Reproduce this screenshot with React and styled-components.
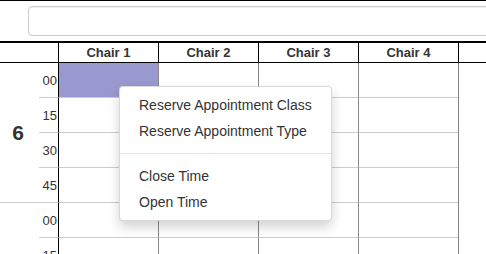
import React from "react";
import styled, { createGlobalStyle } from "styled-components";

const Global = createGlobalStyle`
  html, body { margin: 0; padding: 0; background: #fff; overflow: hidden; }
  body { font-family: "Liberation Sans", Arial, Helvetica, sans-serif; color: #333; }
  * { box-sizing: border-box; }
`;

const Page = styled.div`
  position: relative;
  width: 486px;
  height: 254px;
  overflow: hidden;
  border-top: 1px solid #000;
`;

const Toolbar = styled.div`
  height: 40px;
  padding: 5px 0 0 28px;
  display: flex;
`;

const SearchInput = styled.input`
  flex: 0 0 600px;
  height: 30px;
  border: 1px solid #ccc;
  border-radius: 4px;
  box-shadow: inset 0 1px 1px rgba(0, 0, 0, 0.075);
  outline: none;
`;

const Table = styled.div`
  border-top: 2px solid #000;
`;

const HeaderRow = styled.div`
  display: grid;
  grid-template-columns: 58px 100px 100px 100px 100px 1fr;
  height: 20px;
  border-bottom: 1px solid #000;
`;

const HeaderCell = styled.div`
  border-left: ${(p) => (p.$edge ? "1px solid #000" : "none")};
  font-weight: bold;
  font-size: 13px;
  line-height: 19px;
  text-align: center;
  color: #333;
`;

const Body = styled.div`
  display: grid;
  grid-template-columns: 39px 19px 100px 100px 100px 100px 1fr;
  grid-auto-rows: 35px;
`;

const HourCell = styled.div`
  grid-row: span 4;
  grid-column: 1;
  border-bottom: 1px solid #ccc;
  display: flex;
  align-items: center;
  justify-content: center;
  font-weight: bold;
  font-size: 21px;
  padding-right: 3px;
  color: #333;
`;

const MinuteCell = styled.div`
  grid-column: 2;
  border-bottom: 1px solid #ccc;
  display: flex;
  align-items: center;
  justify-content: flex-end;
  font-size: 13px;
  color: #333;
  padding-right: 1px;
`;

const SlotCell = styled.div`
  border-left: 1px solid ${(p) => (p.$first ? "#000" : "#888")};
  border-bottom: 1px solid #ccc;
  background: ${(p) => (p.$selected ? "#9999cf" : "#fff")};
`;

const Filler = styled.div`
  border-left: 1px solid #888;
`;

const Menu = styled.ul`
  position: absolute;
  left: 119px;
  top: 85px;
  width: 213px;
  margin: 0;
  padding: 5px 0;
  list-style: none;
  background: #fff;
  border: 1px solid rgba(0, 0, 0, 0.15);
  border-radius: 4px;
  box-shadow: 0 6px 12px rgba(0, 0, 0, 0.175);
`;

const MenuItem = styled.li`
  padding: 3px 19px;
  font-size: 14px;
  line-height: 20px;
  color: #333;
  white-space: nowrap;
`;

const Divider = styled.li`
  height: 1px;
  margin: 9px 0;
  background: #e5e5e5;
`;

const chairs = ["Chair 1", "Chair 2", "Chair 3", "Chair 4"];
const hours = [6, 7];
const minutes = ["00", "15", "30", "45"];

export default function App() {
  return (
    <>
      <Global />
      <Page>
        <Toolbar>
          <SearchInput type="text" />
        </Toolbar>
        <Table>
          <HeaderRow>
            <HeaderCell />
            {chairs.map((c) => (
              <HeaderCell key={c} $edge>
                {c}
              </HeaderCell>
            ))}
            <HeaderCell $edge />
          </HeaderRow>
          <Body>
            {hours.map((h) =>
              minutes.map((m, i) => (
                <React.Fragment key={`${h}-${m}`}>
                  {i === 0 && <HourCell>{h === 6 ? h : ""}</HourCell>}
                  <MinuteCell>{m}</MinuteCell>
                  {chairs.map((c, ci) => (
                    <SlotCell
                      key={c}
                      $first={ci === 0}
                      $selected={h === 6 && i === 0 && ci === 0}
                    />
                  ))}
                  <Filler />
                </React.Fragment>
              ))
            )}
          </Body>
        </Table>
        <Menu>
          <MenuItem>Reserve Appointment Class</MenuItem>
          <MenuItem>Reserve Appointment Type</MenuItem>
          <Divider />
          <MenuItem>Close Time</MenuItem>
          <MenuItem>Open Time</MenuItem>
        </Menu>
      </Page>
    </>
  );
}
